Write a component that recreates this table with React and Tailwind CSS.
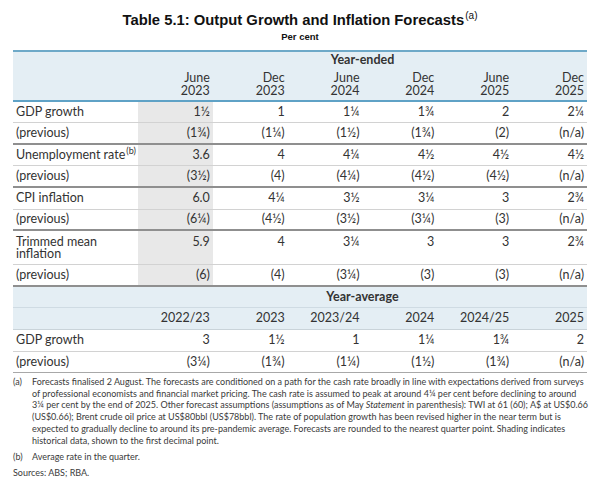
import React from 'react';

const cols = ['June 2023', 'Dec 2023', 'June 2024', 'Dec 2024', 'June 2025', 'Dec 2025'];

const yearEnded = [
    { label: 'GDP growth', values: ['1½', '1', '1¼', '1¾', '2', '2¼'], row: 'h-[21px] border-b border-[#d2d2d2]' },
    { label: '(previous)', values: ['(1¾)', '(1¼)', '(1½)', '(1¾)', '(2)', '(n/a)'], row: 'h-[22px] border-b-2 border-[#8f8f8f]' },
    { label: 'Unemployment rate', sup: '(b)', values: ['3.6', '4', '4¼', '4½', '4½', '4½'], row: 'h-[21px] border-b border-[#d2d2d2]' },
    { label: '(previous)', values: ['(3½)', '(4)', '(4¼)', '(4½)', '(4½)', '(n/a)'], row: 'h-[22px] border-b-2 border-[#8f8f8f]' },
    { label: 'CPI inflation', values: ['6.0', '4¼', '3½', '3¼', '3', '2¾'], row: 'h-[22px] border-b border-[#d2d2d2]' },
    { label: '(previous)', values: ['(6¼)', '(4½)', '(3½)', '(3¼)', '(3)', '(n/a)'], row: 'h-[21px] border-b-2 border-[#8f8f8f]' },
    { label: 'Trimmed mean inflation', values: ['5.9', '4', '3¼', '3', '3', '2¾'], row: 'h-[34px] border-b border-[#d2d2d2]', tall: true },
    { label: '(previous)', values: ['(6)', '(4)', '(3¼)', '(3)', '(3)', '(n/a)'], row: 'h-[22px] border-b-2 border-[#8f8f8f]' },
];

const yearAverage = [
    { label: 'GDP growth', values: ['3', '1½', '1', '1¼', '1¾', '2'], row: 'h-[22px] border-b border-[#d2d2d2]' },
    { label: '(previous)', values: ['(3¼)', '(1¾)', '(1¼)', '(1½)', '(1¾)', '(n/a)'], row: 'h-[21px] border-b border-[#a8a8a8]' },
];

const footA = [
    'Forecasts finalised 2 August. The forecasts are conditioned on a path for the cash rate broadly in line with expectations derived from surveys',
    'of professional economists and financial market pricing. The cash rate is assumed to peak at around 4¼ per cent before declining to around',
    null,
    '(US$0.66); Brent crude oil price at US$80bbl (US$78bbl). The rate of population growth has been revised higher in the near term but is',
    'expected to gradually decline to around its pre-pandemic average. Forecasts are rounded to the nearest quarter point. Shading indicates',
    'historical data, shown to the first decimal point.',
];

const grid = 'grid grid-cols-[125px_repeat(6,1fr)]';

const DataRow = ({ r, shade }) => (
    <div className={`${grid} ${r.row}`}>
        <div className={`pl-[3px] ${r.tall ? 'pt-[5px] leading-[12px] w-[100px]' : 'flex items-center'}`}>
            <span>
                {r.label}
                {r.sup && <sup className="text-[9px] relative -top-[5px] ml-[1px]">{r.sup}</sup>}
            </span>
        </div>
        {r.values.map((v, i) => (
            <div
                key={i}
                className={`pr-[3px] text-right ${r.tall ? 'pt-[5px] leading-[12px]' : 'flex items-center justify-end'} ${shade && i === 0 ? 'bg-[#e8e8e8]' : ''}`}
            >
                {v}
            </div>
        ))}
    </div>
);

const App = () => {
    return (
        <div className="w-[600px] h-[492px] bg-white text-[#333] font-[Lato,sans-serif] overflow-hidden">
            {/* Title */}
            <div className="pt-[12px] text-center font-['Liberation_Sans',Arial,sans-serif] font-bold text-[#111]">
                <div className="text-[14.8px] leading-[17px]">
                    Table 5.1: Output Growth and Inflation Forecasts
                    <sup className="text-[10px] font-normal relative -top-[6px] ml-[1px]">(a)</sup>
                </div>
                <div className="text-[9.5px] leading-[12px] mt-[2px]">Per cent</div>
            </div>

            {/* Table */}
            <div className="mx-[13px] mt-[7px] border-t-2 border-[#6ea9c8] text-[12.5px]">
                {/* Year-ended header */}
                <div className="bg-[#e4eef4] h-[50px] border-b-2 border-[#5fa2c6]">
                    <div className={`${grid}`}>
                        <div />
                        <div className="col-span-6 text-center font-bold leading-[14px] pt-[1px]">Year-ended</div>
                    </div>
                    <div className={`${grid} mt-[5px]`}>
                        <div />
                        {cols.map((c) => (
                            <div key={c} className="text-right pr-[3px] leading-[12.5px]">
                                {c.split(' ')[0]}
                                <br />
                                {c.split(' ')[1]}
                            </div>
                        ))}
                    </div>
                </div>

                {yearEnded.map((r, i) => (
                    <DataRow key={i} r={r} shade />
                ))}

                {/* Year-average header */}
                <div className={`${grid} h-[21px] bg-[#e4eef4] border-b border-[#cfdbe3]`}>
                    <div />
                    <div className="col-span-6 flex items-center justify-center font-bold">Year-average</div>
                </div>
                <div className={`${grid} h-[22px] bg-[#e4eef4] border-b border-[#c9d3d9]`}>
                    <div />
                    {['2022/23', '2023', '2023/24', '2024', '2024/25', '2025'].map((y) => (
                        <div key={y} className="flex items-center justify-end pr-[3px]">{y}</div>
                    ))}
                </div>

                {yearAverage.map((r, i) => (
                    <DataRow key={i} r={r} />
                ))}
            </div>

            {/* Footnotes */}
            <div className="mx-[13px] mt-[3px] text-[9px] leading-[11.7px] text-[#3a3a3a]">
                <div className="flex">
                    <div className="w-[19px] shrink-0">(a)</div>
                    <div>
                        {footA.map((line, i) => (
                            <div key={i} className="whitespace-nowrap">
                                {line === null ? (
                                    <>
                                        3¼ per cent by the end of 2025. Other forecast assumptions (assumptions as of May <i>Statement</i> in parenthesis): TWI at 61 (60); A$ at US$0.66
                                    </>
                                ) : (
                                    line
                                )}
                            </div>
                        ))}
                    </div>
                </div>
                <div className="flex mt-[5px]">
                    <div className="w-[19px] shrink-0">(b)</div>
                    <div>Average rate in the quarter.</div>
                </div>
                <div className="mt-[4px]">Sources: ABS; RBA.</div>
            </div>
        </div>
    );
};

export default App;
